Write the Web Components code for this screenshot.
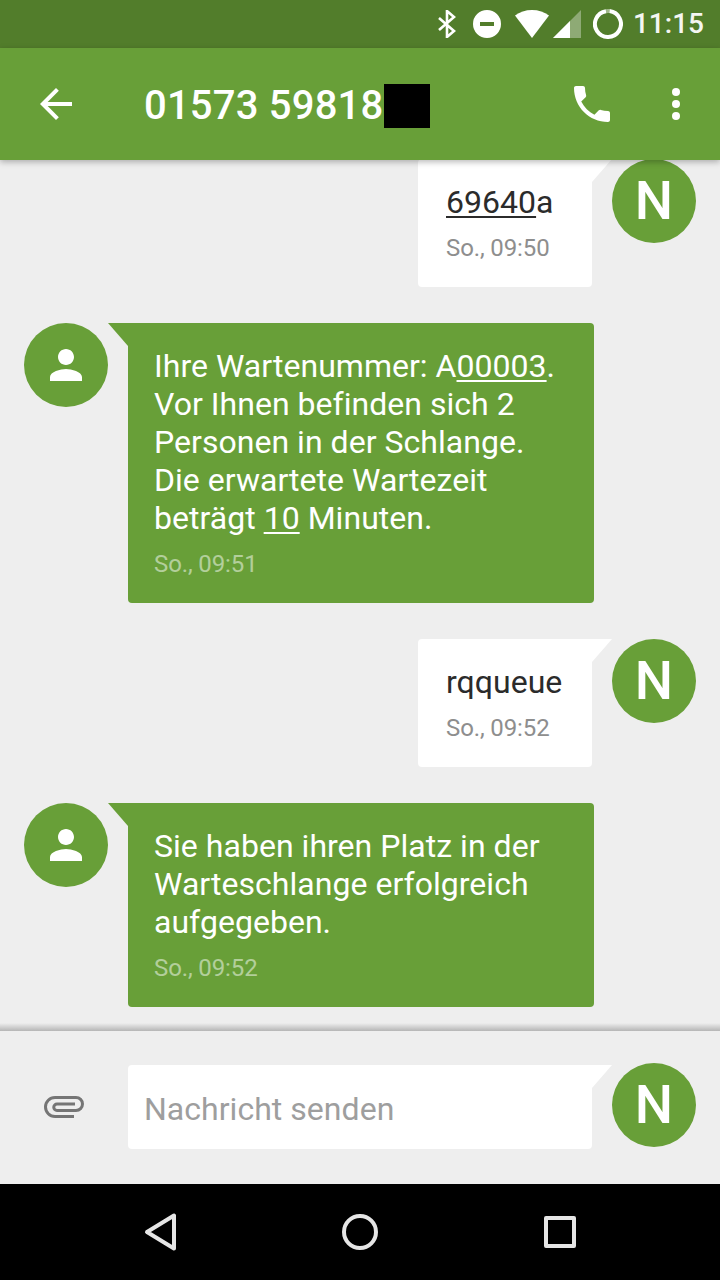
<!DOCTYPE html>
<html lang="de"><head><meta charset="utf-8"><title>SMS</title>
<style>
html,body{margin:0;padding:0;background:#eee}
body{font-family:Roboto,"Liberation Sans",sans-serif}
</style></head><body>
<sms-app>
  <status-bar slot="status"></status-bar>
  <app-toolbar slot="toolbar" title="01573 59818"></app-toolbar>
  <sms-message dir="out" time="So., 09:50"><u>69640</u>a</sms-message>
  <sms-message dir="in" time="So., 09:51">Ihre Wartenummer: A<u>00003</u>. Vor Ihnen befinden sich 2 Personen in der Schlange. Die erwartete Wartezeit beträgt <u>10</u> Minuten.</sms-message>
  <sms-message dir="out" time="So., 09:52">rqqueue</sms-message>
  <sms-message dir="in" time="So., 09:52">Sie haben ihren Platz in der Warteschlange erfolgreich aufgegeben.</sms-message>
  <sms-composer slot="composer" placeholder="Nachricht senden"></sms-composer>
  <nav-bar slot="nav"></nav-bar>
</sms-app>
<script>
function def(name, html){
  customElements.define(name, class extends HTMLElement{
    constructor(){super();this.attachShadow({mode:'open'});}
    connectedCallback(){this.shadowRoot.innerHTML=typeof html==='function'?html(this):html;}
  });
}
def('sms-app',`<style>
:host{display:flex;flex-direction:column;width:720px;height:1280px;overflow:hidden;background:#eee;position:relative}
.list{flex:1;min-height:0;overflow:hidden;display:flex;flex-direction:column;gap:36px;margin-top:-1px}
</style>
<slot name="status"></slot><slot name="toolbar"></slot>
<div class="list"><slot></slot></div>
<slot name="composer"></slot><slot name="nav"></slot>`);

def('status-bar',`<style>
:host{display:flex;align-items:center;justify-content:flex-end;height:48px;background:#527d2b;color:#fff;padding-right:16px;box-sizing:border-box;flex:none}
svg{display:block;flex:none}
.t{font:500 28px/48px Roboto,sans-serif;margin-left:10px;color:#f4f6f2}
</style>
<svg width="20" height="28" viewBox="0 0 20 28" fill="none" stroke="#fff" stroke-width="2.6" style="margin-right:16px"><path d="M2 8L17 21L10 27V1L17 7L2 20"/></svg>
<svg width="28" height="28" viewBox="0 0 28 28" style="margin-right:14px"><path fill="#fff" fill-rule="evenodd" d="M14 0a14 14 0 1 0 0 28a14 14 0 1 0 0-28zM7 12h14v4H7z"/></svg>
<svg width="66" height="28" viewBox="0 0 66 28"><path fill="#fff" d="M0 5.500C4.500 2 10.500 0 17 0S29.500 2 34 5.500L17 28z"/><path fill="#fff" fill-opacity=".35" d="M66 0v28H38z"/><path fill="#fff" d="M55 11v17H38z"/></svg>
<svg width="30" height="30" viewBox="0 0 30 30" style="margin-left:12px"><path fill="none" stroke="#fff" stroke-width="4" d="M16.500 2.100A13 13 0 1 1 13 2.150"/><path fill="none" stroke="#fff" stroke-opacity=".45" stroke-width="4" d="M13 2.150A13 13 0 0 1 16.500 2.100"/></svg>
<span class="t">11:15</span>`);

def('app-toolbar',h=>`<style>
:host{display:flex;align-items:center;height:112px;background:#689f38;position:relative;z-index:2;box-shadow:0 2px 6px rgba(0,0,0,.28);flex:none;color:#fff}
svg{display:block;flex:none}
.back{margin-left:32px}
h1{margin:4px 0 0 64px;font:500 40px/44px Roboto,sans-serif;letter-spacing:.2px;display:flex;align-items:center;flex:1}
i{display:block;width:46px;height:44px;background:#000}
.dots{margin:0 40px 0 56px}
</style>
<svg class="back" width="48" height="48" viewBox="0 0 24 24" fill="#fff"><path d="M20 11H7.830l5.590-5.590L12 4l-8 8 8 8 1.410-1.410L7.830 13H20v-2z"/></svg>
<h1>${h.getAttribute('title')}<i></i></h1>
<svg width="48" height="48" viewBox="0 0 24 24" fill="#fff"><path d="M6.620 10.790c1.440 2.830 3.760 5.140 6.590 6.590l2.200-2.200c.27-.27.67-.36 1.020-.24 1.120.37 2.330.57 3.570.57.55 0 1 .45 1 1V20c0 .55-.45 1-1 1-9.390 0-17-7.610-17-17 0-.55.45-1 1-1h3.500c.55 0 1 .45 1 1 0 1.250.2 2.450.57 3.570.11.35.03.74-.25 1.020l-2.200 2.200z"/></svg>
<svg class="dots" width="8" height="48" viewBox="0 0 8 48" fill="#fff"><circle cx="4" cy="12" r="4"/><circle cx="4" cy="24" r="4"/><circle cx="4" cy="36" r="4"/></svg>`);

def('sms-avatar',`<style>
:host{display:flex;align-items:center;justify-content:center;width:84px;height:84px;border-radius:50%;background:#689f38;color:#fff;flex:none;font:500 54px/84px Roboto,sans-serif}
</style><slot></slot>`);

def('sms-message',h=>{const out=h.getAttribute('dir')==='out';return `<style>
:host{display:flex;flex:none;flex-direction:${out?'row-reverse':'row'};padding:0 ${out?24:0}px 0 ${out?0:24}px;gap:20px}
.b{position:relative;box-sizing:border-box;${out?'min-width:174px;':'width:466px;'}padding:24px ${out?28:26}px 23px;font:400 32px/38px Roboto,sans-serif;letter-spacing:.03px;
 background:${out?'#fff':'#689f38'};color:${out?'#2b2b2b':'#fff'};
 border-radius:${out?'4px 0 4px 4px':'0 4px 4px 4px'}}
.b::before{content:"";position:absolute;top:0;width:20px;height:23px;background:inherit;
 ${out?'left:100%;clip-path:polygon(0 0,100% 0,0 100%)':'right:100%;clip-path:polygon(0 0,100% 0,100% 100%)'}}
.time{display:block;font:400 24px/32px Roboto,sans-serif;letter-spacing:-.12px;margin-top:11px;color:${out?'#8e8e8e':'rgba(255,255,255,.5)'}}
::slotted(u){text-decoration-thickness:1.5px;text-underline-offset:3px}
</style>
<sms-avatar>${out?'N':'<svg width="48" height="48" viewBox="0 0 24 24" fill="#fff" style="display:block"><path d="M12 12c2.210 0 4-1.790 4-4s-1.790-4-4-4-4 1.790-4 4 1.790 4 4 4zm0 2c-2.670 0-8 1.340-8 4v2h16v-2c0-2.660-5.330-4-8-4z"/></svg>'}</sms-avatar>
<div class="b"><slot></slot><span class="time">${h.getAttribute('time')}</span></div>`});

def('sms-composer',h=>`<style>
:host{display:flex;height:153px;box-sizing:border-box;background:#eee;padding:32px 24px 0 0;flex:none;position:relative;gap:20px;align-items:flex-start}
:host::before{content:"";position:absolute;left:0;right:0;top:-8px;height:8px;background:linear-gradient(#eee,#b5b5b5)}
.clip{display:block;flex:none;margin:31px 24px 0 40px}
.in{position:relative;flex:1;height:84px;margin-top:2px;background:#fff;border-radius:4px 0 4px 4px;box-sizing:border-box;padding-left:16px;font:400 32px/88px Roboto,sans-serif;letter-spacing:.03px;color:#9e9e9e}
.in::before{content:"";position:absolute;top:0;left:100%;width:20px;height:23px;background:#fff;clip-path:polygon(0 0,100% 0,0 100%)}
</style>
<svg class="clip" width="44" height="26" viewBox="0 0 44 26" fill="none" stroke="#757575" stroke-width="3"><path d="M34 22.500H15a9.500 9.500 0 0 1 0-19H36a6.500 6.500 0 0 1 0 13H17a3.250 3.250 0 0 1 0-6.500H35"/></svg>
<div class="in">${h.getAttribute('placeholder')}</div>
<sms-avatar>N</sms-avatar>`);

def('nav-bar',`<style>
:host{display:flex;height:96px;background:#000;flex:none;align-items:center;justify-content:center}
div{width:200px;display:flex;justify-content:center}
svg{display:block}
</style>
<div><svg width="48" height="48" viewBox="0 0 48 48" fill="none" stroke="#e6e6e6" stroke-width="4" stroke-linejoin="round"><path d="M38 7.500V40.500L11 24z"/></svg></div>
<div><svg width="48" height="48" viewBox="0 0 48 48" fill="none" stroke="#e6e6e6" stroke-width="4"><circle cx="24" cy="24" r="16"/></svg></div>
<div><svg width="48" height="48" viewBox="0 0 48 48" fill="none" stroke="#e6e6e6" stroke-width="4" stroke-linejoin="round"><rect x="10" y="10" width="28" height="28"/></svg></div>`);
</script>
</body></html>
